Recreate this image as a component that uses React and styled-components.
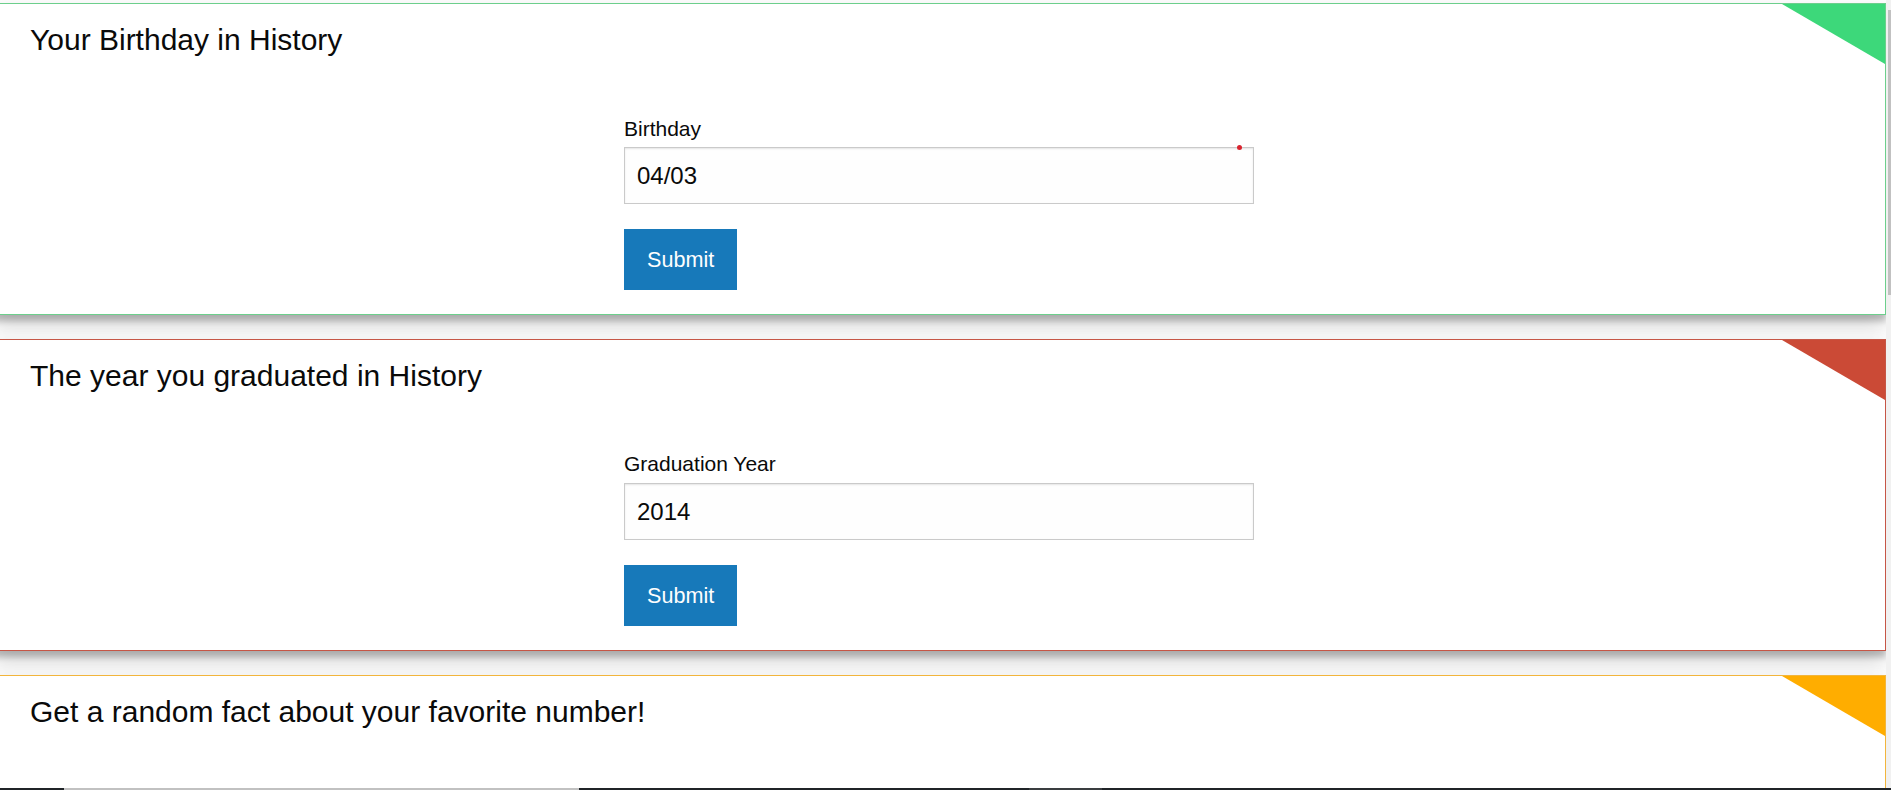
import React from 'react';
import styled, { createGlobalStyle } from 'styled-components';

const GlobalStyle = createGlobalStyle`
  html, body {
    margin: 0;
    padding: 0;
    background: #ffffff;
    overflow: hidden;
    font-family: "Liberation Sans", Arial, sans-serif;
  }
`;

const Page = styled.div`
  height: 790px;
  display: flex;
  flex-direction: column;
`;

const Viewport = styled.div`
  flex: 1;
  min-height: 0;
  display: flex;
`;

const Main = styled.main`
  flex: 1;
  overflow: hidden;
  padding-top: 3px;
  display: flex;
  flex-direction: column;
  gap: 24px;
`;

const ScrollTrack = styled.div`
  width: 5px;
  background: #f1f1f1;
  padding: 10px 0 0 2px;
  box-sizing: border-box;
`;

const ScrollThumb = styled.div`
  width: 3px;
  height: ${p => p.size}px;
  background: #c1c1c1;
`;

const BottomBar = styled.div`
  height: 2px;
  background: #202428;
  display: flex;
`;

const BarPiece = styled.div`
  height: 2px;
  width: ${p => p.size}px;
  background: ${p => p.color || 'transparent'};
  flex-shrink: 0;
`;

const Card = styled.section`
  position: relative;
  flex-shrink: 0;
  margin-left: -8px;
  padding: 15px 37px 24px;
  background: #fff;
  border: 1px solid ${p => p.border};
  box-shadow: 0 10px 20px rgba(0, 0, 0, 0.19), 0 6px 6px rgba(0, 0, 0, 0.2);
`;

const Corner = styled.div`
  position: absolute;
  top: 0;
  right: 0;
  width: 0;
  height: 0;
  border-top: 60px solid ${p => p.color};
  border-left: 103px solid transparent;
`;

const Title = styled.h4`
  margin: 0;
  font-size: 30px;
  line-height: 42px;
  font-weight: 400;
  color: #0a0a0a;
`;

const Form = styled.form`
  width: 630px;
  margin: 48.5px auto 0;
  display: flex;
  flex-direction: column;
  align-items: flex-start;
`;

const Label = styled.label`
  display: block;
  font-size: 21px;
  line-height: 37.8px;
  color: #0a0a0a;
`;

const InputWrap = styled.div`
  position: relative;
  width: 100%;
  margin-bottom: 24.7px;
`;

const Input = styled.input`
  display: block;
  width: 100%;
  height: 57px;
  box-sizing: border-box;
  margin: 0;
  padding: 0 12px;
  border: 1px solid #cacaca;
  box-shadow: inset 0 1px 2px rgba(10, 10, 10, 0.1);
  background: #fefefe;
  font-family: inherit;
  font-size: 24px;
  color: #0a0a0a;
  outline: none;
`;

const Dot = styled.span`
  position: absolute;
  top: -2px;
  right: 12px;
  width: 5px;
  height: 5px;
  border-radius: 50%;
  background: #d9232e;
`;

const Button = styled.button`
  margin: 0;
  padding: 20px 23px;
  border: 0;
  background: #1779ba;
  color: #fefefe;
  font-family: inherit;
  font-size: 21.6px;
  line-height: 21px;
  cursor: pointer;
`;

const sections = [
  {
    title: 'Your Birthday in History',
    label: 'Birthday',
    value: '04/03',
    color: '#3dd87a',
    border: '#6ccf8c',
    dot: true,
  },
  {
    title: 'The year you graduated in History',
    label: 'Graduation Year',
    value: '2014',
    color: '#cb4a36',
    border: '#c65646',
  },
  {
    title: 'Get a random fact about your favorite number!',
    label: 'Favorite Number',
    value: '',
    color: '#ffad00',
    border: '#f2b53c',
  },
];

export default function App() {
  return (
    <>
      <GlobalStyle />
      <Page>
        <Viewport>
          <Main>
            {sections.map(s => (
              <Card key={s.title} border={s.border}>
                <Corner color={s.color} />
                <Title>{s.title}</Title>
                <Form onSubmit={e => e.preventDefault()}>
                  <Label>{s.label}</Label>
                  <InputWrap>
                    <Input type="text" defaultValue={s.value} />
                    {s.dot && <Dot />}
                  </InputWrap>
                  <Button type="submit">Submit</Button>
                </Form>
              </Card>
            ))}
          </Main>
          <ScrollTrack>
            <ScrollThumb size={285} />
          </ScrollTrack>
        </Viewport>
        <BottomBar>
          <BarPiece size={64} />
          <BarPiece size={515} color="#c1c1c1" />
          <BarPiece size={450} />
          <BarPiece size={73} color="#3a3d40" />
        </BottomBar>
      </Page>
    </>
  );
}
